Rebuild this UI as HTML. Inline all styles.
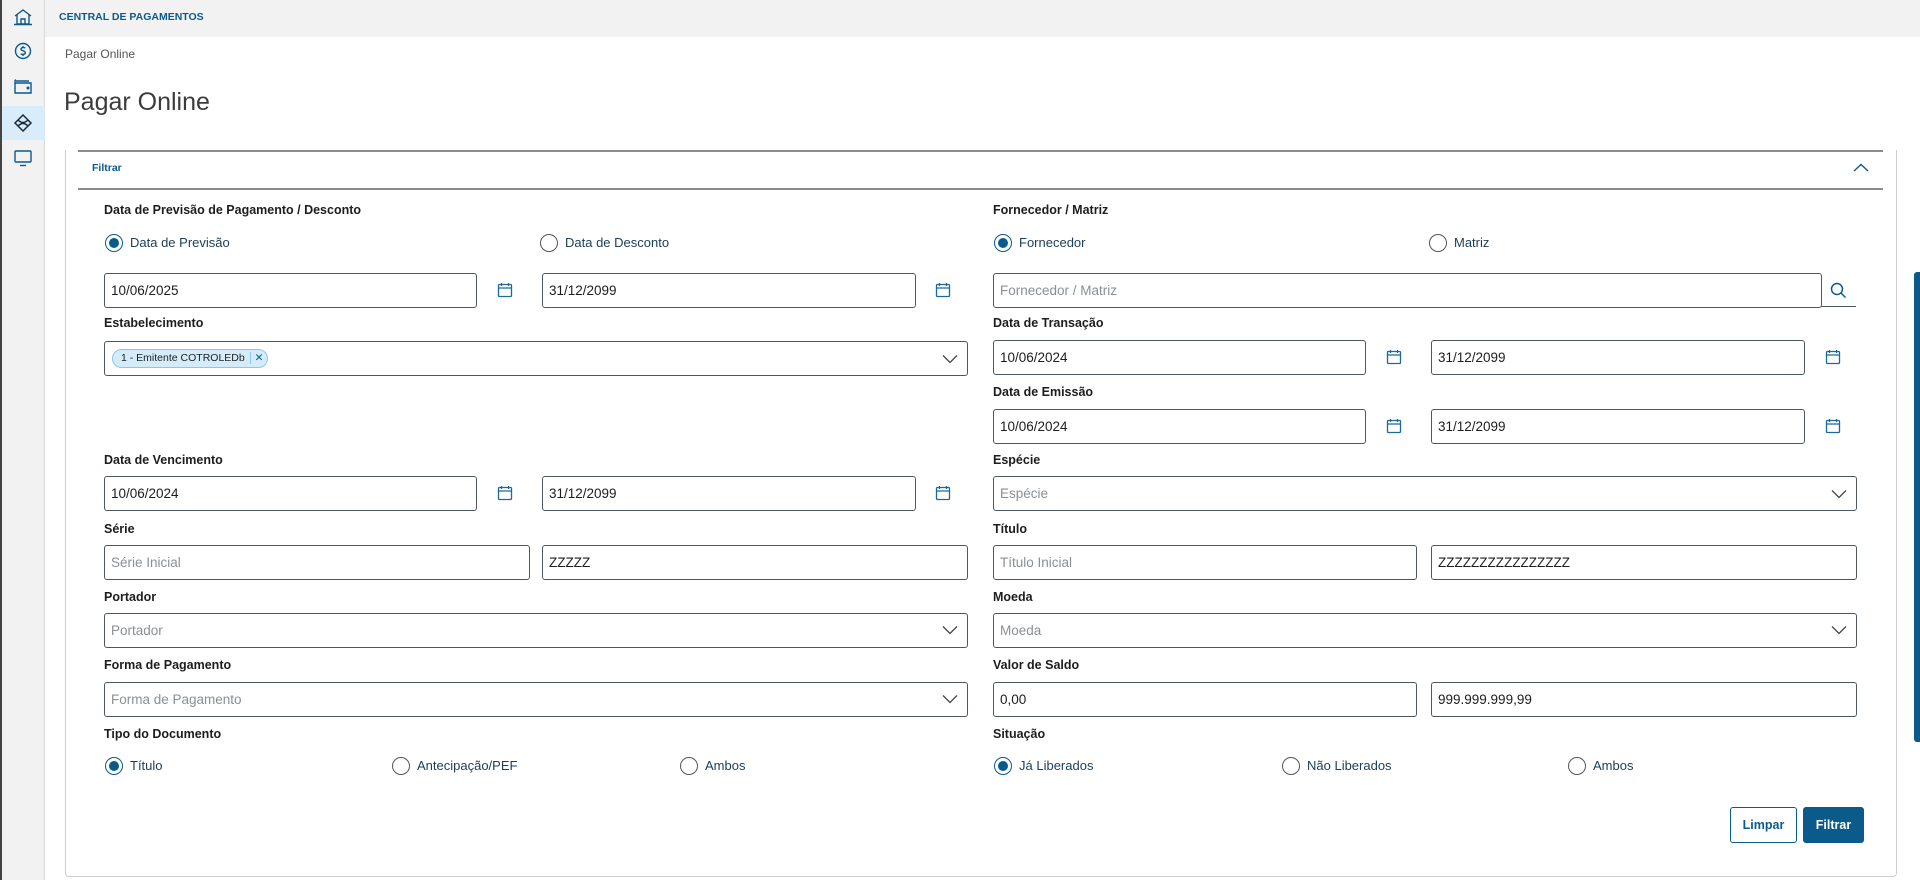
<!DOCTYPE html>
<html><head><meta charset="utf-8"><style>
*{box-sizing:border-box;margin:0;padding:0}
body{width:1920px;height:880px;position:relative;overflow:hidden;background:#fff;font-family:"Liberation Sans",Arial,sans-serif;color:#1d1d1d}
.a{position:absolute}
.side{left:0;top:0;width:45px;height:880px;background:#f2f2f2;border-right:1px solid #d8d8d8;border-left:2px solid #444}
.lbl{position:absolute;font-size:12.5px;font-weight:bold;color:#1d1d1d}
.inp{position:absolute;height:35px;border:1px solid #4d585e;border-radius:3px;font-size:13.5px;padding-left:6px;line-height:33px;color:#1d1d1d;background:#fff}
.ph{color:#8a8f93}
.rad{position:absolute;font-size:13px;color:#1b3d57;line-height:18px;padding-left:25px}
.rad:before{content:"";position:absolute;left:0;top:0;width:18px;height:18px;border:1px solid #555;border-radius:50%;box-sizing:border-box}
.rad.on:before{border:1.5px solid #0b5a8c}
.rad.on:after{content:"";position:absolute;left:4px;top:4px;width:10px;height:10px;border-radius:50%;background:#0b5a8c}
.cal{position:absolute;width:16px;height:16px}
.chev{position:absolute;right:10px;top:11px}
</style></head><body>
<div class="a side">
<svg class="a" style="left:11px;top:8px" width="20" height="18" viewBox="0 0 20 18" fill="none" stroke="#0b5a8c" stroke-width="1.4"><path d="M2 8 L10 2 L18 8 M4 7 V16 H16 V7 M8 16 V11 H12 V16 M1 16.5 H19"/></svg>
<svg class="a" style="left:12px;top:42px" width="18" height="18" viewBox="0 0 18 18" fill="none" stroke="#0b5a8c" stroke-width="1.4"><circle cx="9" cy="9" r="7.5"/><path d="M11.3 6.2 C10.5 5.3 7 5.2 7 7.2 C7 9 11.3 8.5 11.3 10.7 C11.3 12.7 7.6 12.8 6.6 11.7 M9 4 V5.5 M9 12.5 V14"/></svg>
<svg class="a" style="left:12px;top:78px" width="18" height="16" viewBox="0 0 18 16" fill="none" stroke="#0b5a8c" stroke-width="1.4"><path d="M2 3 H15 M1 5 H17 V15 H1 Z M1 5 V3 Q1 2 2 2"/><circle cx="14" cy="10" r="0.8" fill="#0b5a8c"/></svg>
<div class="a" style="left:0;top:106px;width:43px;height:34px;background:#d8ecf9"></div>
<svg class="a" style="left:11px;top:113px" width="20" height="20" viewBox="0 0 20 20" fill="none" stroke="#1d2b36" stroke-width="1.5"><path d="M10 2 L18 10 L10 18 L2 10 Z M5 7 Q10 12 15 7 M5 13 Q10 8 15 13"/></svg>
<svg class="a" style="left:12px;top:150px" width="18" height="17" viewBox="0 0 18 17" fill="none" stroke="#0b5a8c" stroke-width="1.4"><rect x="1" y="1" width="16" height="11" rx="1"/><path d="M6 15.5 H12"/></svg>
</div>
<div class="a" style="left:45px;top:0;width:1875px;height:37px;background:#f2f2f2"></div>
<div class="a" style="left:59px;top:11px;font-size:10.5px;font-weight:bold;color:#0b5a8c">CENTRAL DE PAGAMENTOS</div>
<div class="a" style="left:65px;top:47px;font-size:12px;color:#555">Pagar Online</div>
<div class="a" style="left:64px;top:88px;font-size:25px;color:#3c3c3c">Pagar Online</div>
<!-- panel -->
<div class="a" style="left:65px;top:150px;width:1832px;height:727px;border:1px solid #cfcfcf;border-top:none;border-radius:0 0 4px 4px"></div>
<div class="a" style="left:78px;top:150px;width:1805px;height:1.5px;background:#8c8c8c"></div>
<div class="a" style="left:78px;top:188px;width:1805px;height:1.5px;background:#8c8c8c"></div>
<div class="a" style="left:92px;top:162px;font-size:10.5px;font-weight:bold;color:#0b5a8c">Filtrar</div>
<svg class="a" style="left:1853px;top:163px" width="16" height="10" viewBox="0 0 16 10" fill="none" stroke="#0b5a8c" stroke-width="1.4"><path d="M1 8 L8 1.5 L15 8"/></svg>
<div class="a" style="left:1914px;top:272px;width:6px;height:470px;background:#0b5a8c;border-radius:3px 0 0 3px"></div>

<!-- left column -->
<div class="lbl" style="left:104px;top:203px">Data de Previsão de Pagamento / Desconto</div>
<div class="rad on" style="left:105px;top:234px">Data de Previsão</div>
<div class="rad" style="left:540px;top:234px">Data de Desconto</div>
<div class="inp" style="left:104px;top:273px;width:373px">10/06/2025</div>
<div class="inp" style="left:542px;top:273px;width:374px">31/12/2099</div>

<div class="lbl" style="left:104px;top:316px">Estabelecimento</div>
<div class="inp" style="left:104px;top:341px;width:864px">
<span class="a" style="left:7px;top:7px;height:19px;line-height:17px;border:1px solid #8cc6ea;background:#d4ebfa;border-radius:10px;font-size:10.5px;padding:0 4px 0 8px;color:#222">1 - Emitente COTROLEDb <span style="border-left:1px solid #8cc6ea;padding-left:4px;margin-left:2px;color:#0b5a8c">✕</span></span>
</div>

<div class="lbl" style="left:104px;top:453px">Data de Vencimento</div>
<div class="inp" style="left:104px;top:476px;width:373px">10/06/2024</div>
<div class="inp" style="left:542px;top:476px;width:374px">31/12/2099</div>

<div class="lbl" style="left:104px;top:522px">Série</div>
<div class="inp ph" style="left:104px;top:545px;width:426px">Série Inicial</div>
<div class="inp" style="left:542px;top:545px;width:426px">ZZZZZ</div>

<div class="lbl" style="left:104px;top:590px">Portador</div>
<div class="inp ph" style="left:104px;top:613px;width:864px">Portador</div>

<div class="lbl" style="left:104px;top:658px">Forma de Pagamento</div>
<div class="inp ph" style="left:104px;top:682px;width:864px">Forma de Pagamento</div>

<div class="lbl" style="left:104px;top:727px">Tipo do Documento</div>
<div class="rad on" style="left:105px;top:757px">Título</div>
<div class="rad" style="left:392px;top:757px">Antecipação/PEF</div>
<div class="rad" style="left:680px;top:757px">Ambos</div>

<!-- right column -->
<div class="lbl" style="left:993px;top:203px">Fornecedor / Matriz</div>
<div class="rad on" style="left:994px;top:234px">Fornecedor</div>
<div class="rad" style="left:1429px;top:234px">Matriz</div>
<div class="inp ph" style="left:993px;top:273px;width:829px">Fornecedor / Matriz</div>
<div class="a" style="left:1821px;top:306px;width:35px;height:1px;background:#4d585e"></div>
<svg class="a" style="left:1830px;top:282px" width="17" height="17" viewBox="0 0 17 17" fill="none" stroke="#0b5a8c" stroke-width="1.5"><circle cx="7" cy="7" r="5.5"/><path d="M11 11 L15.5 15.5"/></svg>

<div class="lbl" style="left:993px;top:316px">Data de Transação</div>
<div class="inp" style="left:993px;top:340px;width:373px">10/06/2024</div>
<div class="inp" style="left:1431px;top:340px;width:374px">31/12/2099</div>
<div class="lbl" style="left:993px;top:385px">Data de Emissão</div>
<div class="inp" style="left:993px;top:409px;width:373px">10/06/2024</div>
<div class="inp" style="left:1431px;top:409px;width:374px">31/12/2099</div>

<div class="lbl" style="left:993px;top:453px">Espécie</div>
<div class="inp ph" style="left:993px;top:476px;width:864px">Espécie</div>
<div class="lbl" style="left:993px;top:522px">Título</div>
<div class="inp ph" style="left:993px;top:545px;width:424px">Título Inicial</div>
<div class="inp" style="left:1431px;top:545px;width:426px">ZZZZZZZZZZZZZZZZ</div>
<div class="lbl" style="left:993px;top:590px">Moeda</div>
<div class="inp ph" style="left:993px;top:613px;width:864px">Moeda</div>
<div class="lbl" style="left:993px;top:658px">Valor de Saldo</div>
<div class="inp" style="left:993px;top:682px;width:424px">0,00</div>
<div class="inp" style="left:1431px;top:682px;width:426px">999.999.999,99</div>
<div class="lbl" style="left:993px;top:727px">Situação</div>
<div class="rad on" style="left:994px;top:757px">Já Liberados</div>
<div class="rad" style="left:1282px;top:757px">Não Liberados</div>
<div class="rad" style="left:1568px;top:757px">Ambos</div>

<!-- calendar icons -->
<svg width="0" height="0" style="position:absolute"><defs><symbol id="c" viewBox="0 0 16 16"><g fill="none" stroke="#1a6a9a" stroke-width="1.3"><rect x="1.5" y="2.5" width="13" height="12" rx="1"/><path d="M1.5 6 H14.5 M4.5 1 V4 M11.5 1 V4"/></g></symbol><symbol id="d" viewBox="0 0 16 10"><path d="M1 1.5 L8 8.5 L15 1.5" fill="none" stroke="#444" stroke-width="1.3"/></symbol></defs></svg>
<svg class="cal" style="left:497px;top:282px"><use href="#c"/></svg>
<svg class="cal" style="left:935px;top:282px"><use href="#c"/></svg>
<svg class="cal" style="left:497px;top:485px"><use href="#c"/></svg>
<svg class="cal" style="left:935px;top:485px"><use href="#c"/></svg>
<svg class="cal" style="left:1386px;top:349px"><use href="#c"/></svg>
<svg class="cal" style="left:1825px;top:349px"><use href="#c"/></svg>
<svg class="cal" style="left:1386px;top:418px"><use href="#c"/></svg>
<svg class="cal" style="left:1825px;top:418px"><use href="#c"/></svg>
<!-- chevrons -->
<svg class="a" style="left:942px;top:354px" width="16" height="10"><use href="#d"/></svg>
<svg class="a" style="left:942px;top:625px" width="16" height="10"><use href="#d"/></svg>
<svg class="a" style="left:942px;top:694px" width="16" height="10"><use href="#d"/></svg>
<svg class="a" style="left:1831px;top:489px" width="16" height="10"><use href="#d"/></svg>
<svg class="a" style="left:1831px;top:625px" width="16" height="10"><use href="#d"/></svg>

<div class="a" style="left:1730px;top:807px;width:67px;height:36px;border:1px solid #0b5a8c;border-radius:3px;font-size:12.5px;font-weight:bold;color:#0b5a8c;text-align:center;line-height:34px">Limpar</div>
<div class="a" style="left:1803px;top:807px;width:61px;height:36px;background:#0b5a8c;border-radius:3px;font-size:12.5px;font-weight:bold;color:#fff;text-align:center;line-height:36px">Filtrar</div>
</body></html>
